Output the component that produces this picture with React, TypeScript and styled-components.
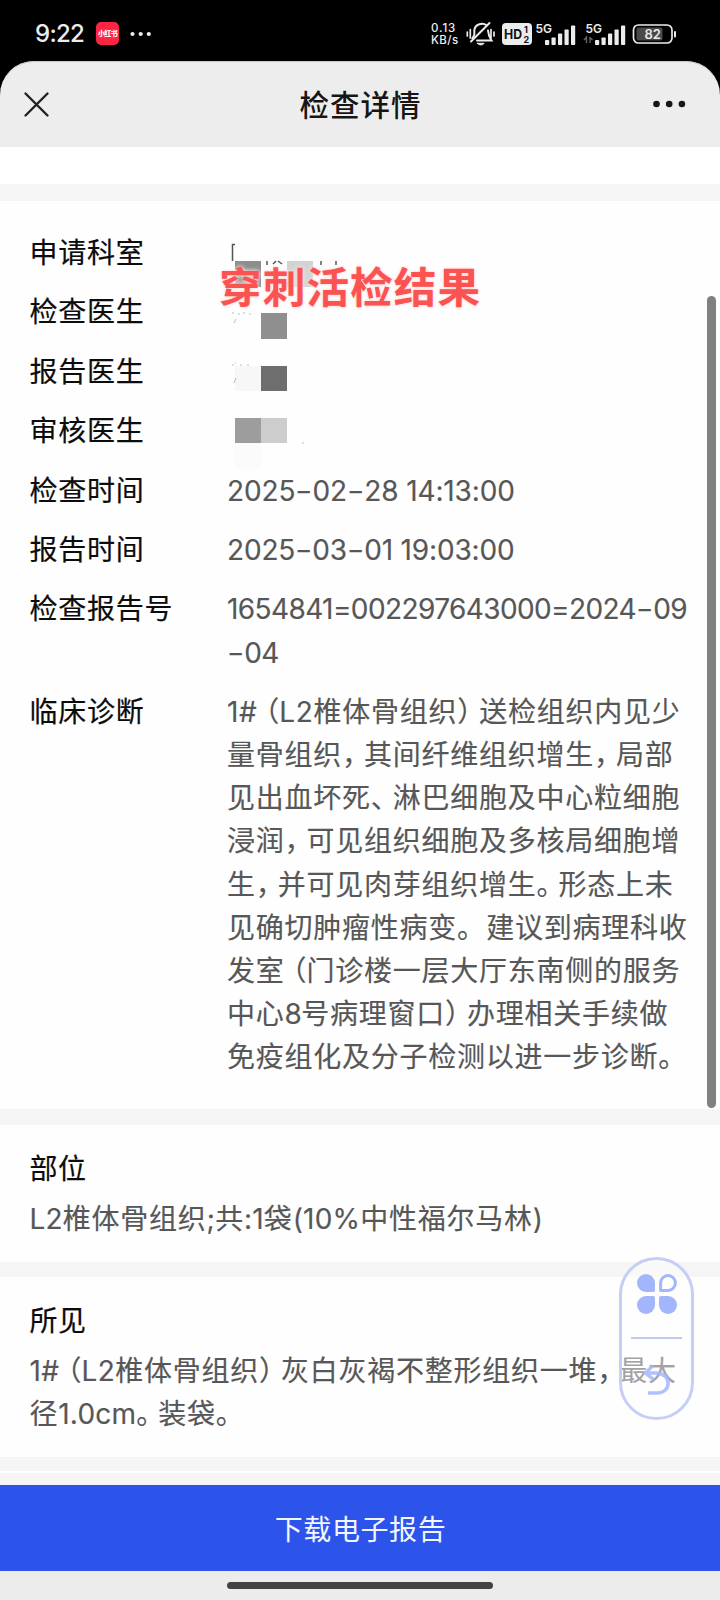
import React from 'react';
import styled, { createGlobalStyle } from 'styled-components';

const GlobalStyle = createGlobalStyle`
  * { box-sizing: border-box; }
  body {
    margin: 0;
    background: #000;
    font-family: Inter, "Noto Sans CJK SC", sans-serif;
  }
`;

const Screen = styled.div`
  position: relative;
  width: 720px;
  height: 1600px;
  display: flex;
  flex-direction: column;
  overflow: hidden;
  background: #000;
`;

const StatusBar = styled.div`
  height: 61px;
  flex: none;
  display: flex;
  align-items: center;
  justify-content: space-between;
  padding: 6px 43px 0 35px;
  color: #ececec;
`;

const StatusGroup = styled.div`
  display: flex;
  align-items: center;
  height: 26px;
`;

const Clock = styled.div`
  width: 61px;
  font-size: 24px;
  font-weight: 500;
  letter-spacing: -0.7px;
  line-height: 27px;
`;

const AppBadge = styled.div`
  width: 23px;
  height: 23px;
  border-radius: 5px;
  background: #fe2443;
  color: #fff;
  display: flex;
  align-items: center;
  justify-content: center;
  font: 900 7px/23px "Noto Sans CJK SC", sans-serif;
  letter-spacing: -0.6px;
  margin-right: 11px;
  white-space: nowrap;
`;

const NetSpeed = styled.div`
  width: 35px;
  font-size: 11.5px;
  font-weight: 500;
  line-height: 12.5px;
  padding-top: 1.5px;
  white-space: nowrap;
`;

const SpeedLine = styled.div<{ $ls: number }>`
  letter-spacing: ${(p) => p.$ls}px;
`;

const Header = styled.header`
  height: 86px;
  flex: none;
  display: grid;
  grid-template-columns: 80px 1fr 80px;
  align-items: center;
  background: #ededed;
  border-radius: 34px 34px 0 0;
  box-shadow: inset 0 1px 0 #c8c8c8;
`;

const Title = styled.h1`
  margin: 0;
  padding: 0 0 3px 1px;
  text-align: center;
  font: 500 29.5px/40px "Noto Sans CJK SC", sans-serif;
  letter-spacing: 1px;
  color: #161616;
`;

const IconSlot = styled.div<{ $end?: boolean }>`
  display: flex;
  justify-content: ${(p) => (p.$end ? 'flex-end' : 'flex-start')};
  padding: ${(p) => (p.$end ? '0 34px 0 0' : '0 0 0 23px')};
`;

const Content = styled.main`
  flex: 1;
  display: flex;
  flex-direction: column;
  background: #f5f5f5;
`;

const Strip = styled.div<{ $h: number; $after: number }>`
  height: ${(p) => p.$h}px;
  margin-bottom: ${(p) => p.$after}px;
  flex: none;
  background: #fff;
`;

const DetailCard = styled.section`
  height: 908px;
  flex: none;
  margin-bottom: 16px;
  padding: 31px 0 0 29.5px;
  background: #fefefe;
  display: flex;
  flex-direction: column;
  gap: 16.2px;
`;

const Row = styled.div`
  display: grid;
  grid-template-columns: 197.5px 1fr;
`;

const Label = styled.div`
  font-size: 28px;
  line-height: 43.2px;
  letter-spacing: 0.75px;
  color: #0c0c0c;
  -webkit-text-stroke: 0.2px #0c0c0c;
`;

const Value = styled.div`
  font-size: 28px;
  line-height: 43.2px;
  letter-spacing: 0.75px;
  color: #575757;
  -webkit-text-stroke: 0.15px #575757;
`;

const LineBox = styled.div`
  height: 43.2px;
  white-space: pre;
`;

const Punct = styled.span<{ $open: boolean }>`
  display: inline-block;
  width: 22px;
  text-align: ${(p) => (p.$open ? 'right' : 'left')};
  font-family: "Noto Sans CJK SC", sans-serif;
  font-feature-settings: "halt";
  line-height: 30px;
  letter-spacing: 0;
`;

const Latin = styled.span<{ $ls: number }>`
  font-size: 28px;
  line-height: 30px;
  letter-spacing: ${(p) => p.$ls}px;
`;

const Dash = styled.span`
  display: inline-block;
  width: 17.2px;
  text-align: center;
  transform: scaleX(1.35);
  letter-spacing: 0;
`;

const Section = styled.section<{ $h: number; $after: number }>`
  height: ${(p) => p.$h}px;
  margin-bottom: ${(p) => p.$after}px;
  flex: none;
  padding: 23px 0 0 29.5px;
  background: #fefefe;
`;

const SectionTitle = styled(Label)`
  margin-bottom: 7px;
  letter-spacing: 0.4px;
`;

const DownloadButton = styled.button`
  height: 86px;
  flex: none;
  margin: 0;
  padding: 0 0 0 1px;
  border: 0;
  background: #2c54ea;
  color: #f3f6ff;
  font: 400 28px/86px "Noto Sans CJK SC", sans-serif;
  letter-spacing: 0.6px;
`;

const HomeArea = styled.footer`
  height: 29px;
  flex: none;
  display: flex;
  justify-content: center;
  padding-top: 11px;
  background: #ececed;
`;

const HomeBar = styled.div`
  width: 266px;
  height: 7px;
  border-radius: 4px;
  background: #434345;
`;

const Mosaic = styled.svg`
  position: absolute;
  left: 225px;
  top: 236px;
`;

const Caption = styled.div`
  position: absolute;
  left: 219px;
  top: 253px;
  font: 700 42.6px/64px "Noto Sans CJK SC", sans-serif;
  letter-spacing: 1.1px;
  color: #fb5252;
  text-shadow: 0 0 3px rgba(255, 190, 190, 0.9), 0 0 5px #fff;
  white-space: nowrap;
`;

const ScrollThumb = styled.div`
  position: absolute;
  left: 706.5px;
  top: 296px;
  width: 9.5px;
  height: 812px;
  border-radius: 5px;
  background: #808080;
`;

const FloatingPill = styled.div`
  position: absolute;
  left: 619px;
  top: 1256.5px;
  width: 75px;
  height: 163.5px;
  border: 3.5px solid #c5cef6;
  border-radius: 38px;
  background: rgba(255, 255, 255, 0.45);
  display: flex;
  flex-direction: column;
  align-items: center;
  padding-top: 14.5px;
`;

const PillRule = styled.div`
  width: 51px;
  height: 1.5px;
  margin: 23px 0 25px;
  background: #bccbee;
`;

/* Splits a line into punctuation, Latin runs and Han text so each is spaced on its own. */
function Line({ text, ls = -0.6 }: { text: string; ls?: number }) {
  const parts = text.match(/[，。、（）]|[\x20-\x7e]+|[^\x20-\x7e，。、（）]+/g) ?? [];
  return (
    <LineBox>
      {parts.map((part, i) => {
        if (/^[，。、（）]$/.test(part)) {
          return <Punct key={i} $open={part === '（'}>{part}</Punct>;
        }
        if (/^[\x20-\x7e]/.test(part)) {
          return (
            <Latin key={i} $ls={ls}>
              {part.split(/(-)/).map((s, j) => (s === '-' ? <Dash key={j}>-</Dash> : s))}
            </Latin>
          );
        }
        return <React.Fragment key={i}>{part}</React.Fragment>;
      })}
    </LineBox>
  );
}

interface ValueLine {
  text: string;
  ls?: number;
}

const diagnosis: ValueLine[] = [
  { text: '1#（L2椎体骨组织）送检组织内见少', ls: 0.6 },
  { text: '量骨组织，其间纤维组织增生，局部' },
  { text: '见出血坏死、淋巴细胞及中心粒细胞' },
  { text: '浸润，可见组织细胞及多核局细胞增' },
  { text: '生，并可见肉芽组织增生。形态上未' },
  { text: '见确切肿瘤性病变。 建议到病理科收' },
  { text: '发室（门诊楼一层大厅东南侧的服务' },
  { text: '中心8号病理窗口）办理相关手续做' },
  { text: '免疫组化及分子检测以进一步诊断。' },
];

const rows: { label: string; lines: ValueLine[] }[] = [
  { label: '申请科室', lines: [] },
  { label: '检查医生', lines: [] },
  { label: '报告医生', lines: [] },
  { label: '审核医生', lines: [] },
  { label: '检查时间', lines: [{ text: '2025-02-28 14:13:00', ls: -0.12 }] },
  { label: '报告时间', lines: [{ text: '2025-03-01 19:03:00', ls: -0.17 }] },
  { label: '检查报告号', lines: [{ text: '1654841=002297643000=2024-09' }, { text: '-04' }] },
  { label: '临床诊断', lines: diagnosis },
];

const Signal = ({ arrows }: { arrows?: boolean }) => (
  <svg width={arrows ? 43 : 40} height="26" viewBox={arrows ? '-3 0 43 26' : '0 0 40 26'} fill="#ececec">
    <text x="-0.500" y="12" fontFamily="Inter" fontSize="12" fontWeight="600">5G</text>
    {[5, 7.5, 11.5, 15.5, 19.5].map((h, i) => (
      <rect key={i} x={9 + i * 6.5} y={24 - h} width="4.2" height={h} rx="0.8" />
    ))}
    {arrows && (
      <path d="M0.5 22v-6l-2.5 3M4 16v6M4 16.500l2.500 2.500" stroke="#666" strokeWidth="1.300" fill="none" />
    )}
  </svg>
);

export default function App() {
  return (
    <Screen>
      <GlobalStyle />
      <StatusBar>
        <StatusGroup>
          <Clock>9:22</Clock>
          <AppBadge>小红书</AppBadge>
          <svg width="22" height="6" fill="#ececec">
            <circle cx="2.500" cy="3" r="2.100" />
            <circle cx="10.700" cy="3" r="2.100" />
            <circle cx="18.800" cy="3" r="2.100" />
          </svg>
        </StatusGroup>
        <StatusGroup>
          <NetSpeed>
            <SpeedLine $ls={0.9}>0.13</SpeedLine>
            <SpeedLine $ls={0.4}>KB/s</SpeedLine>
          </NetSpeed>
          <svg width="36" height="26" viewBox="0 0 36 26" fill="none" stroke="#ececec" strokeWidth="2" strokeLinecap="round">
            <path d="M1.300 11v4M4.300 8.500v8.500M28 11v4M25 8.500v8.500" strokeWidth="1.700" />
            <path d="M20.500 4.300C17 1.500 9 2.500 8.300 9.500V14l-2 3.500M22 9.500c.3 4 .8 6 3.500 10H11" />
            <path d="M23.500 2L5 20.500" />
            <path d="M11.500 22.300h6.500c-1 2.200-5.500 2.200-6.500 0z" fill="#ececec" strokeWidth="1" />
          </svg>
          <svg width="34" height="26" viewBox="0 0 34 26">
            <rect x="0" y="2" width="30" height="22" rx="4" fill="#ececec" />
            <text x="2" y="18.300" fontFamily="Inter" fontSize="13" fontWeight="700" fill="#111" textLength="18" lengthAdjust="spacingAndGlyphs">HD</text>
            <text x="22" y="11.800" fontFamily="Inter" fontSize="9" fontWeight="700" fill="#111">1</text>
            <text x="21.500" y="22.300" fontFamily="Inter" fontSize="9" fontWeight="700" fill="#111">2</text>
          </svg>
          <Signal />
          <svg width="7" height="26" />
          <Signal arrows />
          <svg width="51" height="26" viewBox="-6 0 51 26">
            <rect x="1.500" y="4" width="38.500" height="18" rx="5" fill="none" stroke="#ececec" strokeWidth="1.700" />
            <rect x="4.500" y="6.500" width="26" height="13" rx="2" fill="#4a4a4a" />
            <rect x="42" y="10" width="2" height="6.500" rx="1" fill="#ececec" />
            <text x="20.700" y="17.700" textAnchor="middle" fontFamily="Inter" fontSize="13" fontWeight="600" fill="#ececec">82</text>
          </svg>
        </StatusGroup>
      </StatusBar>

      <Header>
        <IconSlot>
          <svg width="27" height="27" viewBox="0 0 27 27" stroke="#222" strokeWidth="2.400" strokeLinecap="round">
            <path d="M2.500 2.500l22 22M24.500 2.500l-22 22" />
          </svg>
        </IconSlot>
        <Title>检查详情</Title>
        <IconSlot $end>
          <svg width="33" height="8" fill="#161616">
            <circle cx="3.500" cy="4" r="3.300" />
            <circle cx="16.200" cy="4" r="3.300" />
            <circle cx="28.900" cy="4" r="3.300" />
          </svg>
        </IconSlot>
      </Header>

      <Content>
        <Strip $h={37} $after={17} />
        <DetailCard>
          {rows.map((row) => (
            <Row key={row.label}>
              <Label>{row.label}</Label>
              <Value>
                {row.lines.map((line) => (
                  <Line key={line.text} {...line} />
                ))}
              </Value>
            </Row>
          ))}
        </DetailCard>
        <Section $h={137} $after={15}>
          <SectionTitle>部位</SectionTitle>
          <Value>
            <Line text="L2椎体骨组织;共:1袋(10%中性福尔马林)" ls={0.2} />
          </Value>
        </Section>
        <Section $h={180} $after={14}>
          <SectionTitle>所见</SectionTitle>
          <Value>
            <Line text="1#（L2椎体骨组织）灰白灰褐不整形组织一堆，最大" ls={0.4} />
            <Line text="径1.0cm。装袋。" ls={0.2} />
          </Value>
        </Section>
        <Strip $h={2} $after={12} />
      </Content>

      <DownloadButton>下载电子报告</DownloadButton>
      <HomeArea>
        <HomeBar />
      </HomeArea>

      <Mosaic width="120" height="236">
        <path d="M10 8.500H7.500V25" stroke="#555" strokeWidth="1.500" fill="none" />
        <path d="M42 25v4M48 28l3-3M53 25l4 3M96 25v4M111 25v4" stroke="#555" strokeWidth="1.500" fill="none" />
        <rect x="10" y="25" width="26" height="26" fill="#8d8d8d" />
        <rect x="62" y="25" width="26" height="26" fill="#d2d2d2" />
        <rect x="36" y="77" width="26" height="26" fill="#8f8f8f" />
        <rect x="10" y="130" width="26" height="25" fill="#f7f7f7" />
        <rect x="36" y="130" width="26" height="25" fill="#6e6e6e" />
        <rect x="10" y="182" width="26" height="25" fill="#9d9d9d" />
        <rect x="36" y="182" width="26" height="25" fill="#cdcdcd" />
        <rect x="10" y="207" width="26" height="26" fill="#fbfbfb" />
        <path d="M7 77h2M13 78h2M18 77h2M24 78h2M11 83l-2 4M7 129h2M10 127h1M15 129h2M22 129h2M11 142l-2 5M77 207h2" stroke="#bbb" fill="none" />
      </Mosaic>
      <Caption>穿刺活检结果</Caption>
      <ScrollThumb />
      <FloatingPill>
        <svg width="40" height="40" viewBox="0 0 40 40" fill="#a3b6fb">
          <path d="M9 0a9 9 0 0 1 9 9v7a2 2 0 0 1-2 2H9A9 9 0 0 1 9 0z" />
          <path d="M9 40a9 9 0 0 0 9-9v-7a2 2 0 0 0-2-2H9a9 9 0 0 0 0 18z" />
          <path d="M31 40a9 9 0 0 1-9-9v-7a2 2 0 0 1 2-2h7a9 9 0 0 1 0 18z" />
          <path d="M31 1.600a7.400 7.400 0 0 0-7.400 7.400v7.400H31a7.400 7.400 0 0 0 0-14.800z" fill="#fff" stroke="#a3b6fb" strokeWidth="3" strokeLinejoin="round" />
        </svg>
        <PillRule />
        <svg width="30" height="32" viewBox="0 0 30 32" fill="none" stroke="#a3b6fb" strokeWidth="3.500" strokeOpacity="0.85">
          <path d="M11 1.500L3.500 9l8 6.500M4 9h10c16 0 16 20 1 20H6" />
        </svg>
      </FloatingPill>
    </Screen>
  );
}
